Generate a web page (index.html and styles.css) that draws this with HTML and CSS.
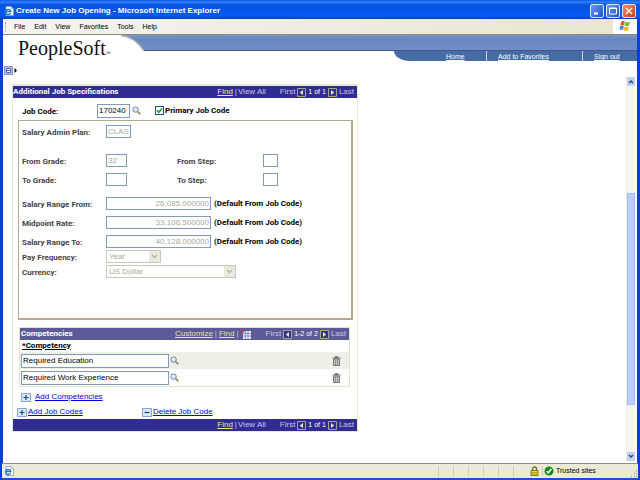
FILE: index.html
```html
<!DOCTYPE html>
<html lang="en">
<head>
  <meta charset="UTF-8">
  <title>Create New Job Opening</title>
  <link rel="stylesheet" href="styles.css">
</head>
<body>
  <svg class="defs" width="0" height="0" aria-hidden="true">
    <symbol id="search" viewBox="0 0 9 9">
      <path d="M5.5 5.5L8.3 8.3" stroke="#8a7a4a" stroke-width="1.5"/>
      <circle cx="3.6" cy="3.6" r="2.7" fill="#d5e8fa" stroke="#7484a0" stroke-width="1"/>
      <path d="M2.3 3.4L3.6 2.2" stroke="#fff" stroke-width="1"/>
    </symbol>
    <symbol id="trash" viewBox="0 0 9 10">
      <path d="M1.5 3h6v6.5h-6z" fill="#c4c4c4" stroke="#777" stroke-width="1"/>
      <path d="M.5 2h8M3 .8h3" stroke="#666" stroke-width="1.2"/>
      <path d="M3.5 3.5v5.5M5.5 3.5v5.5" stroke="#888" stroke-width=".8"/>
    </symbol>
    <symbol id="prev" viewBox="0 0 9 9">
      <path d="M.5 .5h8v8h-8z" fill="#34318c" stroke="#a5a584"/>
      <path d="M6 2v5L2.8 4.5z" fill="#e4e4ee"/>
    </symbol>
    <symbol id="next" viewBox="0 0 9 9">
      <path d="M.5 .5h8v8h-8z" fill="#34318c" stroke="#a5a584"/>
      <path d="M3 2v5l3.2-2.5z" fill="#e4e4ee"/>
    </symbol>
    <symbol id="plus" viewBox="0 0 10 9">
      <path d="M.5 .5h9v8h-9z" fill="#d9e8f7" stroke="#8ba5c5"/>
      <path d="M2.5 4.5h5M5 2v5" stroke="#1c4a86" stroke-width="1.2"/>
    </symbol>
    <symbol id="minus" viewBox="0 0 10 9">
      <path d="M.5 .5h9v8h-9z" fill="#d9e8f7" stroke="#8ba5c5"/>
      <path d="M2.5 4.5h5" stroke="#1c4a86" stroke-width="1.2"/>
    </symbol>
    <symbol id="iepage" viewBox="0 0 10 10">
      <path d="M2 .5h5l2.5 2.5v6.5h-7.5z" fill="#fff" stroke="#8c9bb5" stroke-width=".8"/>
      <path d="M7 .5v2.5h2.5" fill="#d8dfea" stroke="#8c9bb5" stroke-width=".6"/>
      <path d="M6.5 7A2.5 2.5 0 1 1 6.7 5.5H2" fill="none" stroke="#1b78c8" stroke-width="1.4"/>
    </symbol>
  </svg>

  <div class="window">
    <div class="titlebar">
      <svg width="10" height="10"><use href="#iepage"/></svg>
      <h1>Create New Job Opening - Microsoft Internet Explorer</h1>
      <button class="winbtn" aria-label="Minimize"><svg width="12" height="12"><path d="M3 8.5h4" stroke="#fff" stroke-width="2"/></svg></button>
      <button class="winbtn" aria-label="Maximize"><svg width="12" height="12"><path d="M2.5 3h7v6h-7zM2.5 3.5h7" fill="none" stroke="#fff"/></svg></button>
      <button class="winbtn close" aria-label="Close"><svg width="12" height="12"><path d="M3 3l6 6M9 3l-6 6" stroke="#fff" stroke-width="1.4"/></svg></button>
    </div>

    <div class="menubar">
      <span class="grip"></span>
      <button>File</button>
      <button>Edit</button>
      <button>View</button>
      <button>Favorites</button>
      <button>Tools</button>
      <button>Help</button>
      <span class="flag">
        <svg width="12" height="12" viewBox="0 0 12 12">
          <path d="M2.2 1.5q2-1 3.6 0L5 5.4q-1.6-1-3.6 0z" fill="#e2572b"/>
          <path d="M6.4 1.8q2 1 4.6 0L10 5.6q-2 1-4.4 0z" fill="#7bb83c"/>
          <path d="M1.2 6.1q2-1 3.6 0L4 10q-1.6-1-3.6 0z" fill="#4a82d8"/>
          <path d="M5.4 6.4q2 1 4.6 0L9 10.2q-2 1-4.4 0z" fill="#f2b92c"/>
        </svg>
      </span>
    </div>

    <div class="page">
      <div class="client">
        <header class="masthead">
          <div class="logo">PeopleSoft<span>®</span></div>
          <div class="bands">
            <div class="band">
              <svg width="24" height="16" viewBox="0 0 24 16">
                <path d="M0 0Q14 2 23 16H0z" fill="#fff"/>
                <path d="M0 .5Q14 2 23 16" fill="none" stroke="#b5b0ac" stroke-width="1.4"/>
              </svg>
            </div>
            <nav class="toplinks">
              <a href="#">Home</a>
              <a href="#">Add to Favorites</a>
              <a href="#">Sign out</a>
            </nav>
          </div>
        </header>

        <div class="workspace">
          <main>
            <button class="pagemenu" aria-label="Open menu">
              <svg width="14" height="9" viewBox="0 0 14 9">
                <path d="M.5 .5h8v8h-8z" fill="#b5c3e2" stroke="#8794b8"/>
                <path d="M2.5 2.5h4v4h-4z" fill="#fff" stroke="#5468a8"/>
                <path d="M3 4.5h3" stroke="#5468a8"/>
                <path d="M10.5 2v5l2.5-2.5z" fill="#000"/>
              </svg>
            </button>

            <section class="specs">
              <div class="bar">
                <h2>Additional Job Specifications</h2>
                <div class="pager">
                  <a href="#">Find</a><span class="sep">|</span><span class="all">View All</span>
                  <span>First</span>
                  <svg width="9" height="9"><use href="#prev"/></svg>
                  <span class="count">1 of 1</span>
                  <svg width="9" height="9"><use href="#next"/></svg>
                  <span>Last</span>
                </div>
              </div>

              <div class="jobcode">
                <label for="jobcode">Job Code:</label>
                <input id="jobcode" type="text" value="170240">
                <button class="icon" aria-label="Look up job code"><svg width="9" height="9"><use href="#search"/></svg></button>
                <input id="primary" type="checkbox" checked>
                <label for="primary">Primary Job Code</label>
              </div>

              <div class="details">
                <div class="group">
                  <div class="field">
                    <label for="plan">Salary Admin Plan:</label>
                    <input id="plan" class="code" type="text" value="CLAS" disabled>
                  </div>
                </div>
                <div class="group">
                  <div class="field">
                    <label for="fromgrade">From Grade:</label>
                    <input id="fromgrade" class="grade" type="text" value="32" disabled>
                    <label for="fromstep" class="steplabel">From Step:</label>
                    <input id="fromstep" class="step" type="text" disabled>
                  </div>
                  <div class="field">
                    <label for="tograde">To Grade:</label>
                    <input id="tograde" class="grade" type="text" disabled>
                    <label for="tostep" class="steplabel">To Step:</label>
                    <input id="tostep" class="step" type="text" disabled>
                  </div>
                </div>
                <div class="group">
                  <div class="field">
                    <label for="rangefrom">Salary Range From:</label>
                    <input id="rangefrom" class="amount" type="text" value="26,085.000000" disabled>
                    <span class="note">(Default From Job Code)</span>
                  </div>
                  <div class="field">
                    <label for="midpoint">Midpoint Rate:</label>
                    <input id="midpoint" class="amount" type="text" value="33,106.500000" disabled>
                    <span class="note">(Default From Job Code)</span>
                  </div>
                  <div class="field">
                    <label for="rangeto">Salary Range To:</label>
                    <input id="rangeto" class="amount" type="text" value="40,128.000000" disabled>
                    <span class="note">(Default From Job Code)</span>
                  </div>
                </div>
                <div class="group tight">
                  <div class="field">
                    <label for="frequency">Pay Frequency:</label>
                    <select id="frequency" class="short" disabled><option>Year</option></select>
                  </div>
                  <div class="field">
                    <label for="currency">Currency:</label>
                    <select id="currency" class="long" disabled><option>US Dollar</option></select>
                  </div>
                </div>
              </div>

              <div class="competencies">
                <div class="bar light">
                  <h2>Competencies</h2>
                  <div class="pager">
                    <a href="#">Customize</a><span class="sep">|</span><a href="#">Find</a><span class="sep">|</span>
                    <svg class="gridicon" width="10" height="9" viewBox="0 0 10 9">
                      <path d="M2 1h8v8h-8z" fill="#e8ecf8"/>
                      <path d="M2 3.5h8M2 6h8M4.5 1v8M7 1v8" stroke="#7086bc" stroke-width=".8"/>
                      <path d="M0 0l4 1-3 3z" fill="#d83a3a"/>
                    </svg>
                    <span>First</span>
                    <svg width="9" height="9"><use href="#prev"/></svg>
                    <span class="count">1-2 of 2</span>
                    <svg width="9" height="9"><use href="#next"/></svg>
                    <span>Last</span>
                  </div>
                </div>
                <table>
                  <thead>
                    <tr><th colspan="2"><span>*Competency</span></th></tr>
                  </thead>
                  <tbody>
                    <tr>
                      <td>
                        <div class="lookup">
                          <input type="text" value="Required Education" aria-label="Competency 1">
                          <button class="icon" aria-label="Look up competency"><svg width="9" height="9"><use href="#search"/></svg></button>
                        </div>
                      </td>
                      <td class="remove"><button class="icon" aria-label="Delete row"><svg width="9" height="10"><use href="#trash"/></svg></button></td>
                    </tr>
                    <tr>
                      <td>
                        <div class="lookup">
                          <input type="text" value="Required Work Experience" aria-label="Competency 2">
                          <button class="icon" aria-label="Look up competency"><svg width="9" height="9"><use href="#search"/></svg></button>
                        </div>
                      </td>
                      <td class="remove"><button class="icon" aria-label="Delete row"><svg width="9" height="10"><use href="#trash"/></svg></button></td>
                    </tr>
                  </tbody>
                </table>
              </div>

              <div class="actions inner">
                <a href="#"><svg width="10" height="9"><use href="#plus"/></svg><span>Add Competencies</span></a>
              </div>
              <div class="actions">
                <a href="#"><svg width="10" height="9"><use href="#plus"/></svg><span>Add Job Codes</span></a>
                <a href="#"><svg width="10" height="9"><use href="#minus"/></svg><span>Delete Job Code</span></a>
              </div>

              <div class="bar">
                <div class="pager">
                  <a href="#">Find</a><span class="sep">|</span><span class="all">View All</span>
                  <span>First</span>
                  <svg width="9" height="9"><use href="#prev"/></svg>
                  <span class="count">1 of 1</span>
                  <svg width="9" height="9"><use href="#next"/></svg>
                  <span>Last</span>
                </div>
              </div>
            </section>
          </main>

          <div class="scrollbar">
            <button aria-label="Scroll up"><svg width="8" height="9"><path d="M2 6l2-2 2 2" fill="none" stroke="#33406a" stroke-width="1.4"/></svg></button>
            <span class="before"></span>
            <span class="thumb"></span>
            <span class="after"></span>
            <button aria-label="Scroll down"><svg width="8" height="9"><path d="M2 3l2 2 2-2" fill="none" stroke="#33406a" stroke-width="1.4"/></svg></button>
          </div>
        </div>
      </div>
    </div>

    <footer class="statusbar">
      <svg width="10" height="10"><use href="#iepage"/></svg>
      <span class="cells"><i></i><i></i><i></i><i></i><i></i><i></i></span>
      <span class="lock">
        <svg width="9" height="10" viewBox="0 0 9 10">
          <path d="M2.5 5V3a2 2 0 0 1 4 0v2" fill="none" stroke="#77701c" stroke-width="1.3"/>
          <path d="M1 4.5h7v5h-7z" fill="#e8d83a" stroke="#665f14" stroke-width=".8"/>
          <path d="M1.5 6.5h6M1.5 8h6" stroke="#8c8420" stroke-width=".6"/>
        </svg>
      </span>
      <span class="zone">
        <svg width="10" height="10" viewBox="0 0 10 10">
          <circle cx="5" cy="5" r="4.5" fill="#168a22"/>
          <path d="M2.7 5.2l1.6 1.8 3-4" fill="none" stroke="#fff" stroke-width="1.4"/>
        </svg>
        Trusted sites
      </span>
      <svg class="resize" width="8" height="8"><path d="M6 1h1M4 3.5h1M6 3.5h1M1 6.5h1M4 6.5h1M6 6.5h1" stroke="#aaa68e" stroke-width="1.5"/></svg>
    </footer>
  </div>
</body>
</html>
```
FILE: styles.css
```css
* { box-sizing: border-box; }
body { margin: 0; font-family: "Liberation Sans", Arial, sans-serif; font-size: 8px; line-height: 10px; color: #000; background: #fff; }
svg { display: block; flex: none; }
.defs { position: absolute; }
h1, h2 { margin: 0; font-size: 8px; line-height: 10px; white-space: nowrap; }
button, input, select { font: inherit; margin: 0; }
button { border: 0; padding: 0; background: none; color: inherit; }

.window { min-height: 100vh; display: flex; flex-direction: column; background: #0b3fd8; }

/* title bar */
.titlebar { display: flex; align-items: center; gap: 2px; height: 19px; padding: 2px 4px 0 4px; background: linear-gradient(#0a58e8 0, #2f80f8 2px, #0852e0 5px, #0457ee 13px, #0558f4 16px, #0340c0 19px); color: #fff; }
.titlebar h1 { flex: 1; }
.winbtn { border: 1px solid #dbe6fb; border-radius: 2px; background: linear-gradient(135deg, #6d9bf5, #1e4fd0); }
.winbtn.close { background: linear-gradient(135deg, #f09070, #d03c14); }

/* menu */
.menubar { display: flex; align-items: center; height: 16px; margin: 0 3px; padding-left: 2px; background: linear-gradient(90deg, #f4f3ee, #e8e5cf); border-bottom: 1px solid #8c8a80; font-size: 7px; }
.menubar button { margin-right: 9px; }
.grip { width: 1px; height: 10px; margin-right: 8px; border-left: 1px dotted #a8a593; }
.flag { margin-left: auto; width: 24px; height: 15px; padding: 1px 6px; background: #fff; }

.page { flex: 1; display: flex; margin: 0 3px; background: #fff; }
.client { flex: 1; display: flex; flex-direction: column; }

/* masthead */
.masthead { display: flex; }
.logo { width: 118px; height: 26px; padding-left: 15px; font-family: "Liberation Serif", "Times New Roman", serif; font-size: 20px; line-height: 26px; color: #111; }
.logo span { font-size: 7px; line-height: 7px; }
.bands { flex: 1; display: flex; flex-direction: column; align-items: flex-end; }
.band { width: 100%; height: 16px; background: linear-gradient(#7a94c4, #6688c0 4px, #6f8dc6 14px); border-bottom: 1px solid #505088; }
.toplinks { display: flex; height: 10px; width: 243px; background: #466ca6; border-bottom-left-radius: 16px 10px; font-size: 7px; justify-content: flex-end; }
.toplinks a { color: #fff; padding: 1px 0 0 11px; border-left: 1px solid #c8d4e8; white-space: nowrap; }
.toplinks a:nth-child(1) { width: 40px; padding-left: 0; border: 0; }
.toplinks a:nth-child(2) { width: 96px; }
.toplinks a:nth-child(3) { width: 55px; }

.workspace { flex: 1; display: flex; justify-content: space-between; }
main { padding: 5px 0 16px 1px; }
.pagemenu { display: block; margin-bottom: 9px; }

/* panels */
.specs { width: 346px; margin-left: 8px; border: 1px solid #e6e8d4; border-top-width: 2px; }
.bar { display: flex; align-items: center; justify-content: space-between; height: 12px; background: #302c94; color: #fff; }
.bar.light { background: #5c5a98; }
.bar.light h2 { padding-left: 1px; }
.pager { display: flex; align-items: center; gap: 2px; margin-left: auto; padding-right: 3px; color: #c6c6e0; white-space: nowrap; }
.pager a { color: #e6e49c; }
.pager .all { margin: 0 12px 0 -1px; }
.count { font-size: 7px; color: #fff; }
.gridicon { margin-right: 13px; }

input[type="text"] { height: 14px; padding: 0 1px; border: 1px solid #7f9db9; background: #fff; color: #000; }
input[type="text"]:disabled { height: 13px; color: #aca899; }
h2, label, th, .note { font-family: Roboto, "Liberation Sans", sans-serif; }
label, .note { font-weight: bold; white-space: nowrap; }
.icon { display: block; }

.jobcode { display: flex; align-items: center; height: 22px; padding: 3px 0 0 9px; }
.jobcode label:first-child { width: 75px; padding-top: 2px; }
.jobcode input[type="text"] { width: 33px; margin-right: 2px; }
.jobcode input[type="checkbox"] { appearance: none; width: 9px; height: 9px; margin: 0 1px 0 14px; border: 1px solid #1c5180; background: #fff url("data:image/svg+xml,%3Csvg xmlns='http://www.w3.org/2000/svg' viewBox='0 0 7 7'%3E%3Cpath d='M1 3.3l1.8 2L6 1.5' fill='none' stroke='%2321a121' stroke-width='1.5'/%3E%3C/svg%3E"); }

.details { margin: 0 4px 0 5px; min-height: 200px; padding: 1px 0 0 3px; border: 2px solid #b3a98c; border-width: 1px 2px 2px 1px; }
.group { margin-bottom: 5px; }
.group:first-child { margin-bottom: 10px; }
.field { display: flex; align-items: center; height: 19px; color: #444; }
.group.tight { margin-top: -7px; }
.tight .field { height: 15px; }
.field label:first-child { width: 84px; padding-top: 2px; }
.field .code { width: 25px; }
.field .grade { width: 21px; }
.field .steplabel { width: 86px; margin-left: 50px; padding-top: 2px; }
.field .step { width: 15px; }
.field .amount { width: 105px; text-align: right; }
.note { margin-left: 3px; color: #000; }
select { appearance: none; height: 13px; padding: 0 2px; border: 1px solid #c9c7ba; border-radius: 0; color: #aca899; background: #fff url("data:image/svg+xml,%3Csvg xmlns='http://www.w3.org/2000/svg' viewBox='0 0 11 11'%3E%3Cpath d='M0 0h11v11H0z' fill='%23ebe9de'/%3E%3Cpath d='M3 4l2.5 2.5L8 4' fill='none' stroke='%23b8b5a4' stroke-width='1.5'/%3E%3C/svg%3E") right center / 11px 11px no-repeat; }
select:disabled { opacity: 1; }
.short { width: 55px; }
.long { width: 130px; }

.competencies { margin: 7px 7px 0 6px; border: 1px solid #e2e4cc; }
table { width: 100%; border-collapse: collapse; }
th { height: 12px; padding: 0 2px; text-align: left; }
th span { text-decoration: underline; }
td { height: 17px; padding: 0 1px; }
tbody tr:first-child { background: #efefe8; }
.lookup { display: flex; align-items: center; gap: 1px; }
.lookup input { width: 148px; }
.remove { width: 18px; }

.actions { display: flex; height: 15px; padding-left: 4px; align-items: flex-start; }
.actions.inner { padding-left: 8px; margin-top: 5px; }
.actions a { display: flex; align-items: center; gap: 1px; width: 125px; color: #0000e0; white-space: nowrap; text-decoration: none; }
.actions a span { text-decoration: underline; }
.actions.inner a { gap: 4px; }
.actions + .bar { margin-top: -3px; }

/* scroll bar */
.scrollbar { display: flex; flex-direction: column; width: 9px; margin: 16px 2px 2px 0; border-left: 1px solid #eeede5; background: #f6f5f0; }
.scrollbar button { height: 9px; background: #c0d0f8; }
.before { flex: 107; }
.thumb { flex: 211; background: #bccef8; border: 1px solid #a6bbee; }
.after { flex: 47; }

/* status bar */
.statusbar { display: flex; align-items: center; height: 17px; margin: 0 2px; border-top: 1px solid #908e80; border-bottom: 2px solid #1450e0; background: #ebe9d8; padding-left: 2px; }
.cells { display: flex; margin-left: auto; }
.cells i { width: 15px; height: 11px; border-left: 1px solid #cfccba; }
.lock { padding: 0 3px 0 2px; }
.zone { display: flex; align-items: center; gap: 2px; padding-left: 1px; border-left: 1px solid #cfccba; width: 88px; font-size: 7px; white-space: nowrap; }
.resize { align-self: flex-end; }
```
